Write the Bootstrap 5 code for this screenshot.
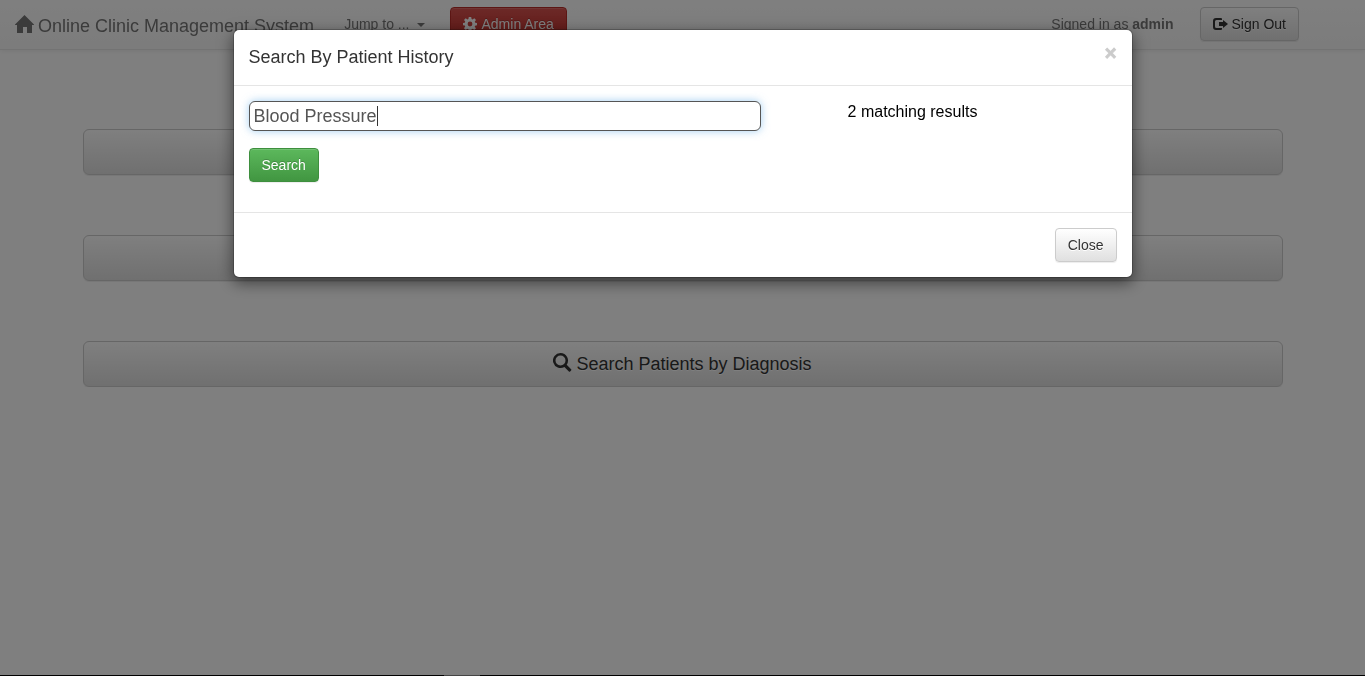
<!DOCTYPE html>
<html lang="en">
<head>
<meta charset="utf-8">
<meta name="viewport" content="width=device-width, initial-scale=1">
<title>Online Clinic Management System</title>
<link href="https://cdn.jsdelivr.net/npm/bootstrap@5.3.0/dist/css/bootstrap.min.css" rel="stylesheet">
<style>
body { font-family: "Liberation Sans", Arial, sans-serif; font-size: 14px; line-height: 20px; color: #333; }
.clinic-bar { height: 50px; padding: 0 66px 2px 15px; background: linear-gradient(#fff, #f8f8f8); border-bottom: 1px solid #e7e7e7; box-shadow: 0 1px 5px rgba(0,0,0,.075); color: #777; }
.clinic-bar .navbar-brand { font-size: 18px; line-height: 20px; color: #777; padding: 4px 0 0; margin: 0 30px 0 0; gap: 4px; }
.navbar-brand .glyph { margin-bottom: 4px; }
.jump-link { color: #777; text-decoration: none; margin-right: 25px; }
.jump-link::after { margin-left: 8px; border-width: 4px 4px 0; vertical-align: 2px; }
.btn { --bs-btn-font-size: 14px; --bs-btn-line-height: 20px; --bs-btn-padding-y: 6px; --bs-btn-padding-x: 12px; --bs-btn-border-radius: 4px; box-shadow: inset 0 1px 0 rgba(255,255,255,.15), 0 1px 1px rgba(0,0,0,.075); }
.btn-plain { background: linear-gradient(#fff, #e0e0e0); border-color: #ccc; color: #333; text-shadow: 0 1px 0 #fff; }
.btn-admin { background: linear-gradient(#d9534f, #c12e2a); border-color: #b92c28; color: #fff; text-shadow: 0 -1px 0 rgba(0,0,0,.2); }
.btn-find { background: linear-gradient(#5cb85c, #419641); border-color: #3e8f3e; color: #fff; text-shadow: 0 -1px 0 rgba(0,0,0,.2); }
.btn-wide { --bs-btn-font-size: 18px; --bs-btn-line-height: 24px; --bs-btn-padding-y: 10px; --bs-btn-border-radius: 6px; height: 46px; }
.btn-wide .glyph { margin-bottom: 3px; }
.search-list { max-width: 1200px; padding-top: 81px; gap: 60px; }
.glyph { fill: currentColor; flex: none; }
.modal-dialog { max-width: 900px; margin: 29px auto; }
.modal-content { border: 1px solid rgba(0,0,0,.2); border-radius: 6px; box-shadow: 0 5px 15px rgba(0,0,0,.5); }
.modal-header { padding: 15px; height: 56px; border-color: #e5e5e5; }
.modal-title { font-size: 18px; line-height: 25px; font-weight: 400; }
.close-mark { border: 0; padding: 0; background: none; font-size: 20px; line-height: 17px; font-weight: 700; color: #000; opacity: .2; -webkit-text-stroke: 1px #000; }
.modal-body { padding: 15px 15px 30px; }
.query-row { margin-bottom: 17px; }
.history-box { flex: 0 0 59%; min-width: 0; height: 30px; padding: 1px 4px; border: 1px solid #555; border-radius: 6px; font-size: 18px; color: #555; outline: 0;
  background: linear-gradient(#333, #333) 128px 5px / 1px 20px no-repeat #fff; background-origin: border-box; box-shadow: 0 0 8px rgba(102,175,233,.6); }
.result-count { flex: 0 0 35%; font-size: 16px; line-height: 22px; color: #000; }
.modal-footer { padding: 15px; border-color: #e5e5e5; }
.modal-footer > * { margin: 0; }
.modal-backdrop { --bs-backdrop-opacity: .5; }
.signed-in { margin-right: 26px; }
.edge-strip { height: 1px; z-index: 1060; background: #000; padding-left: 444px; }
.edge-strip span { width: 36px; background: #444; }
</style>
</head>
<body>
<nav class="clinic-bar fixed-top d-flex align-items-center">
  <a class="navbar-brand d-flex align-items-center" href="#">
    <svg class="glyph" width="19" height="18" viewBox="0 0 19 18" aria-hidden="true"><path d="M9.500 0 19 9.500v.5h-2v8h-5v-6H8v6H2v-8H0v-.5z"/></svg>
    <span>Online Clinic Management System</span>
  </a>
  <a class="jump-link dropdown-toggle" href="#">Jump to ...</a>
  <button type="button" class="btn btn-admin d-flex align-items-center gap-1">
    <svg class="glyph" width="14" height="14" viewBox="0 0 14 14" aria-hidden="true"><path fill-rule="evenodd" d="M5.800 0h2.400l.4 2 1 .4 1.700-1.100L13 3l-1.200 1.600.4 1.100 1.800.3v2.300l-1.900.4-.4 1L13 11.200 11.300 13l-1.700-1.200-1 .4-.4 1.800H5.800l-.4-1.800-1-.4L2.700 13 1 11.200l1.200-1.600-.4-1L0 8.300V6l1.800-.3.4-1.100L1 3l1.700-1.700 1.700 1.100 1-.4zM7 4.600a2.400 2.400 0 1 0 0 4.800 2.400 2.400 0 0 0 0-4.800z"/></svg>
    <span>Admin Area</span>
  </button>
  <span class="signed-in ms-auto">Signed in as <strong>admin</strong></span>
  <button type="button" class="btn btn-plain d-flex align-items-center gap-1">
    <svg class="glyph" width="15" height="14" viewBox="0 0 15 14" aria-hidden="true"><path d="M8 1H3Q0 1 0 4v6q0 3 3 3h5q1 0 1-1v-1H3.500Q2 11 2 9.500v-5Q2 3 3.500 3H9V2q0-1-1-1zM10 3l5 4-5 4V9H6V5h4z"/></svg>
    <span>Sign Out</span>
  </button>
</nav>

<main class="mt-5">
  <div class="search-list mx-auto d-flex flex-column">
    <button type="button" class="btn btn-plain btn-wide" aria-label="Search patients by name"></button>
    <button type="button" class="btn btn-plain btn-wide" aria-label="Search patients by history"></button>
    <button type="button" class="btn btn-plain btn-wide d-flex align-items-center justify-content-center gap-1">
      <svg class="glyph" width="19" height="19" viewBox="0 0 19 19" aria-hidden="true"><path fill-rule="evenodd" d="M7.500 0a7.500 7.500 0 1 0 3.900 13.900l4.500 4.500q.6.600 1.200 0l1-1q.6-.6 0-1.200L13.700 11.700A7.500 7.500 0 0 0 7.500 0zm0 2.500a5 5 0 1 1 0 10 5 5 0 0 1 0-10z"/></svg>
      <span>Search Patients by Diagnosis</span>
    </button>
  </div>
</main>

<div class="modal-backdrop show"></div>
<div class="modal show d-block" tabindex="-1" role="dialog" aria-labelledby="historyTitle">
  <div class="modal-dialog">
    <div class="modal-content">
      <div class="modal-header align-items-start justify-content-between">
        <h4 class="modal-title" id="historyTitle">Search By Patient History</h4>
        <button type="button" class="close-mark" aria-label="Close">×</button>
      </div>
      <form class="modal-body">
        <div class="query-row d-flex align-items-start">
          <input class="history-box" type="text" value="Blood Pressure" aria-label="Patient history">
          <div class="result-count text-center">2 matching results</div>
        </div>
        <button type="button" class="btn btn-find">Search</button>
      </form>
      <div class="modal-footer">
        <button type="button" class="btn btn-plain">Close</button>
      </div>
    </div>
  </div>
</div>
<div class="edge-strip fixed-bottom d-flex"><span></span></div>
<script src="https://cdn.jsdelivr.net/npm/bootstrap@5.3.0/dist/js/bootstrap.bundle.min.js"></script>
</body>
</html>
